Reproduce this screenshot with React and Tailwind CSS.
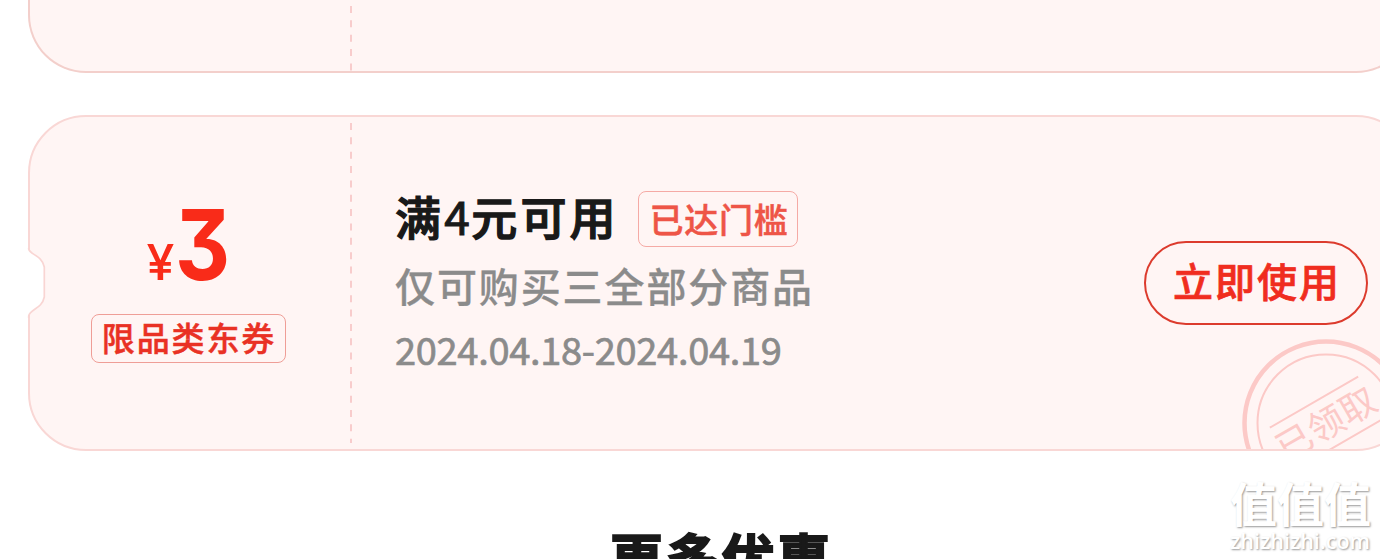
import React from "react";

const cjk = "font-['Noto_Sans_CJK_SC',sans-serif]";

const Divider = ({ className }) => (
  <svg className={className} preserveAspectRatio="none">
    <line x1="1" y1="0" x2="1" y2="100%" stroke="#f8cccc" strokeWidth="2" strokeDasharray="7 7.35" />
  </svg>
);

const Stamp = () => (
  <svg className="absolute top-[220px] left-[1210px] size-[172px]" viewBox="0 0 172 172" fill="none" stroke="#fcc9c7">
    <circle cx="86" cy="86" r="81.5" strokeWidth="4.5" />
    <circle cx="86" cy="86" r="68.5" strokeWidth="2" />
    <g transform="rotate(-30 86 86)">
      <path d="M35 62H137M35 111H137" strokeWidth="2" />
      <text
        x="86"
        y="100"
        textAnchor="middle"
        fontSize="36"
        letterSpacing="0.5"
        fontWeight="400"
        stroke="none"
        fill="#fcc9c7"
        fontFamily="'Noto Sans CJK SC', sans-serif"
      >
        已领取
      </text>
    </g>
  </svg>
);

const Notch = () => (
  <svg className="absolute top-[133px] -left-[2px] h-[70px] w-5" viewBox="0 0 20 70" fill="none">
    <path d="M0 0H2.7V1C4 7 16 7 18.3 19V49C16 61 4 61 2.7 68V70H0Z" fill="#fff" />
    <path d="M2.7 0V1C4 7 16 7 18.3 19V49C16 61 4 61 2.7 68V70" stroke="#f9d5d3" strokeWidth="1.7" />
  </svg>
);

const Coupon = () => (
  <div className="relative mt-[42px] ml-7 h-[336px] w-[1386px] shrink-0">
    <div className="relative flex h-full overflow-hidden rounded-[58px] border-2 border-[#f9d7d5] bg-[#fff5f4]">
      <div className="flex w-[316px] shrink-0 flex-col items-center pt-[83px]">
        <div className="flex h-[89px] items-baseline font-['Inter',sans-serif] leading-[89px] text-[#f92b19]">
          <span className="text-[50px] font-medium">¥</span>
          <span className="-mr-[9px] ml-px inline-block origin-left scale-x-[0.87] text-[98px] font-bold [font-feature-settings:'cv09']">
            3
          </span>
        </div>
        <div className="mt-[25px] flex h-[49px] w-[195px] items-center justify-center rounded-lg border border-[#ef9e97] pb-[2px] pl-0.5 text-[33px] font-medium tracking-[1.9px] text-[#e93124] [-webkit-text-stroke:0.5px]">
          限品类东券
        </div>
      </div>

      <Divider className="mt-1.5 ml-1 h-[320px] w-0.5 shrink-0" />

      <div className="flex grow flex-col pt-[74px] pl-[43px]">
        <div className="flex h-14 items-center">
          <h3 className="-mt-[9px] w-[243px] text-[46px] leading-[56px] font-medium tracking-[3.2px] whitespace-nowrap text-[#191919] [-webkit-text-stroke:1.3px]">
            满<span className="inline-block w-[27px] font-normal [-webkit-text-stroke:1px]">4</span>元可用
          </h3>
          <span className="flex h-14 w-40 items-center justify-center rounded-lg border border-[#f5aaa5] pb-[2px] pl-0.5 text-[34px] font-medium tracking-[0.7px] text-[#ee5547] [-webkit-text-stroke:0.5px]">
            已达门槛
          </span>
        </div>
        <p className="mt-[9px] text-[40px] leading-[58px] font-medium tracking-[1.9px] text-[#8b8b8b] [-webkit-text-stroke:0.3px]">
          仅可购买三全部分商品
        </p>
        <p className="mt-[7px] text-[38px] leading-[56px] tracking-[-0.3px] text-[#8b8b8b] [-webkit-text-stroke:0.7px]">
          2024.04.18-2024.04.19
        </p>
      </div>

      <Stamp />

      <button className="mt-[124px] mr-[44px] flex h-[84px] w-[224px] items-center justify-center rounded-full border-2 border-[#dc3b2d] pb-1.5 pl-0.5 text-[40px] font-medium tracking-[2px] text-[#f02d1f] [-webkit-text-stroke:0.7px]">
        立即使用
      </button>
    </div>
    <Notch />
  </div>
);

const Watermark = () => (
  <div className="absolute top-[473px] right-[7px] flex w-[143px] flex-col text-white [text-shadow:1px_1px_2px_#999]">
    <span className="text-[47px] leading-[58px] font-bold whitespace-nowrap">值值值</span>
    <span className="-mt-[5px] font-['Open_Sans',sans-serif] text-[21.5px] leading-[30px] font-semibold whitespace-nowrap">
      zhizhizhi.com
    </span>
  </div>
);

export default function App() {
  return (
    <div className={`relative flex h-[559px] w-full flex-col overflow-hidden bg-white ${cjk}`}>
      <div className="ml-7 flex h-[73px] w-[1386px] shrink-0 rounded-b-[58px] border-2 border-t-0 border-[#f3cfcb] bg-[#fff5f4]">
        <Divider className="ml-[320px] mt-1.5 h-[65px] w-0.5" />
      </div>
      <Coupon />
      <h2 className="mt-[66px] ml-[610px] text-[53px] leading-[78px] font-bold tracking-[2.8px] text-[#191919] [-webkit-text-stroke:2px]">
        更多优惠
      </h2>
      <Watermark />
    </div>
  );
}
